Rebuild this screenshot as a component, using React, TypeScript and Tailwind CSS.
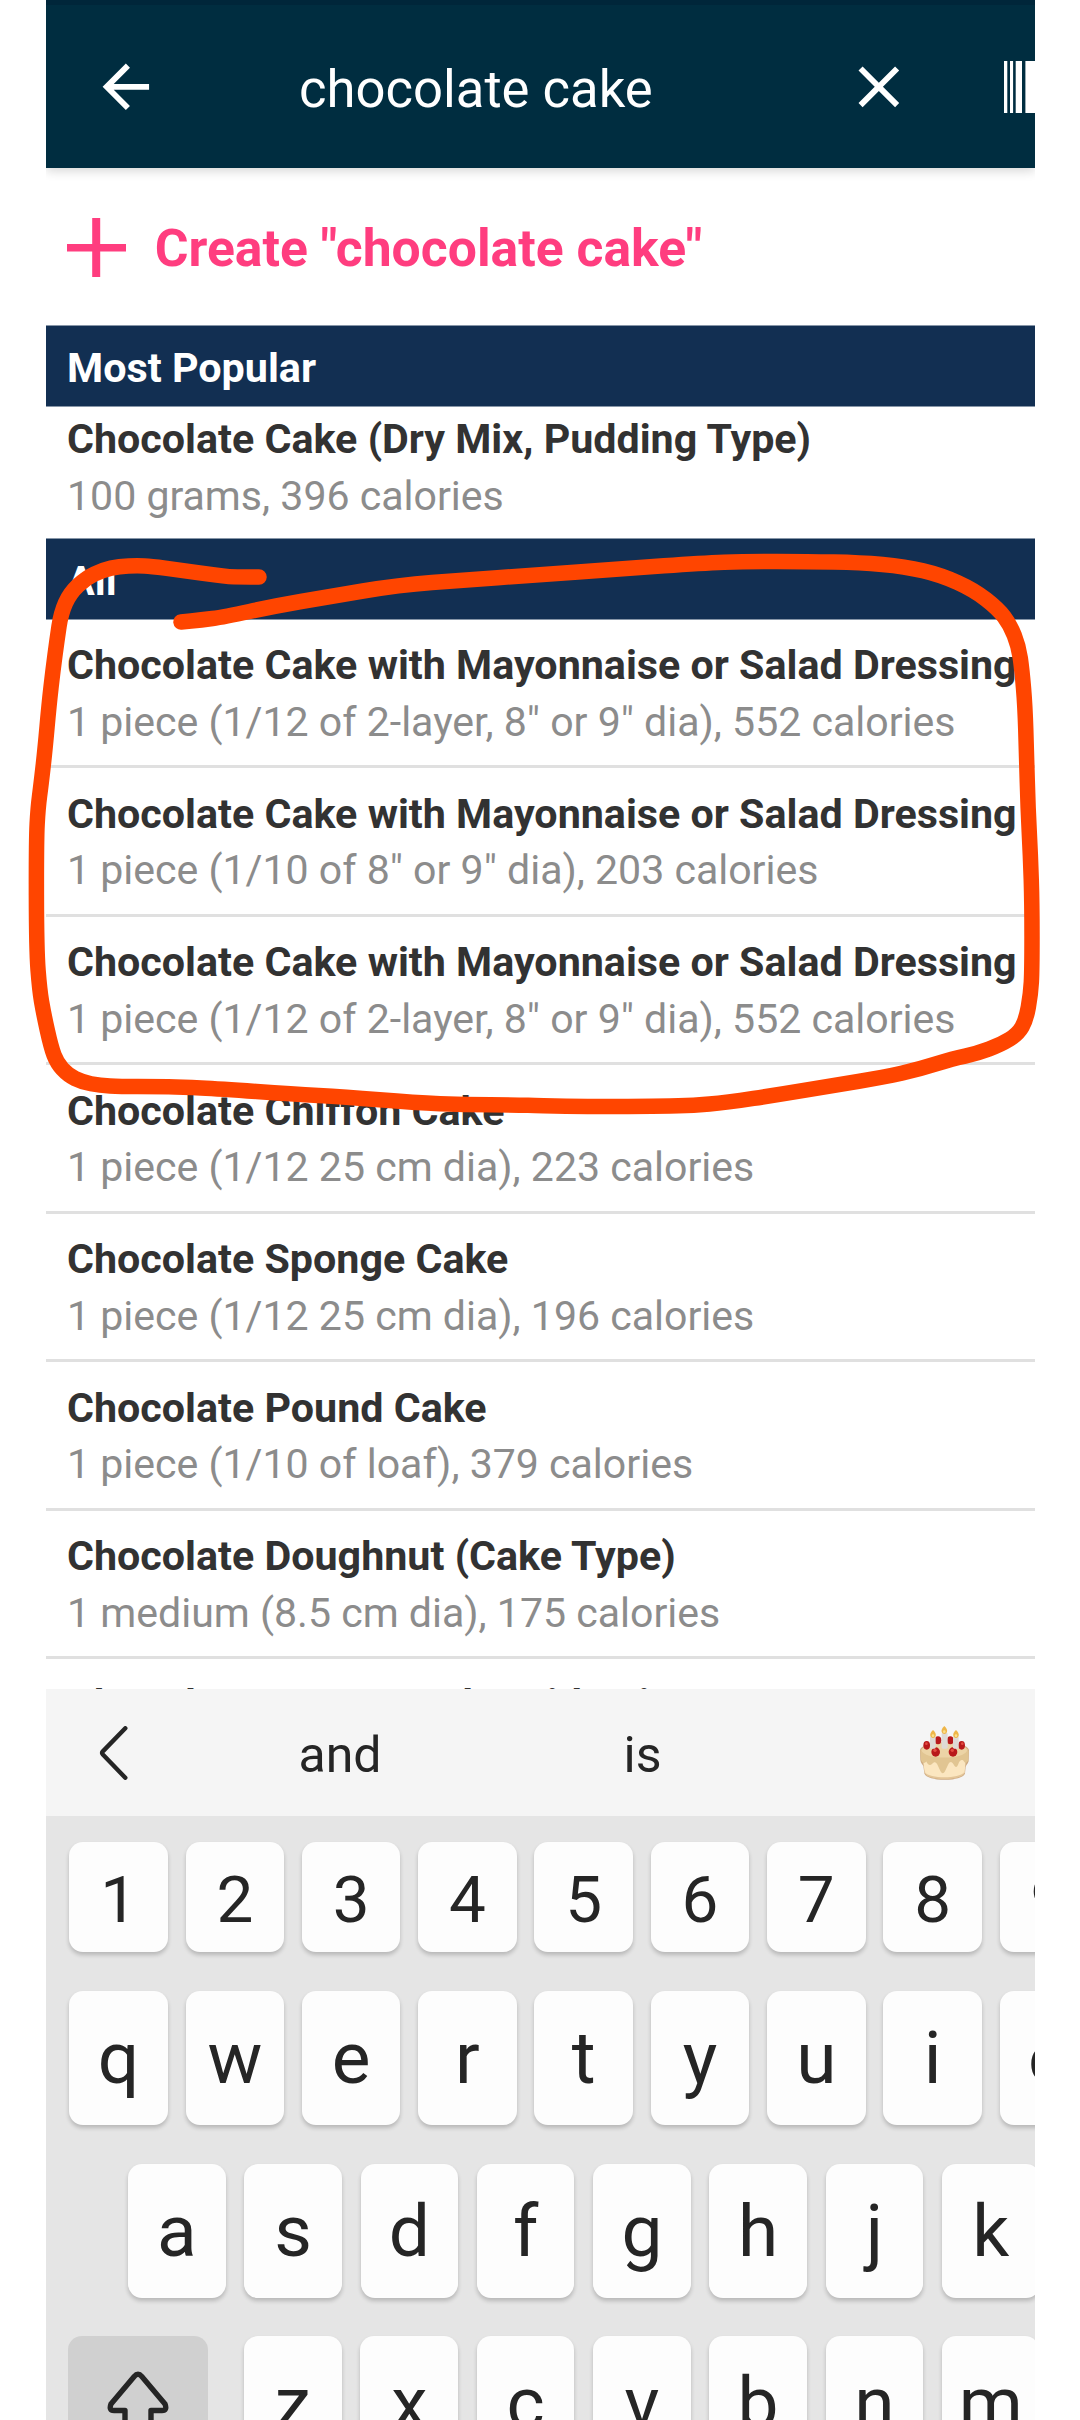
type Food = { name: string; detail: string };

const popular: Food[] = [
  { name: "Chocolate Cake (Dry Mix, Pudding Type)", detail: "100 grams, 396 calories" },
];

const foods: Food[] = [
  { name: "Chocolate Cake with Mayonnaise or Salad Dressing", detail: '1 piece (1/12 of 2-layer, 8" or 9" dia), 552 calories' },
  { name: "Chocolate Cake with Mayonnaise or Salad Dressing", detail: '1 piece (1/10 of 8" or 9" dia), 203 calories' },
  { name: "Chocolate Cake with Mayonnaise or Salad Dressing", detail: '1 piece (1/12 of 2-layer, 8" or 9" dia), 552 calories' },
  { name: "Chocolate Chiffon Cake", detail: "1 piece (1/12 25 cm dia), 223 calories" },
  { name: "Chocolate Sponge Cake", detail: "1 piece (1/12 25 cm dia), 196 calories" },
  { name: "Chocolate Pound Cake", detail: "1 piece (1/10 of loaf), 379 calories" },
  { name: "Chocolate Doughnut (Cake Type)", detail: "1 medium (8.5 cm dia), 175 calories" },
  { name: "Chocolate Banana Cake with Icing", detail: "" },
];

function AppBar() {
  return (
    <header className="relative z-10 h-[168px] shrink-0 border-t-[5px] border-[#00263a] bg-[#002d40] text-white shadow-[0_3px_10px_rgba(0,0,0,0.16)]">
      <div className="flex h-[163px] items-center">
        <svg viewBox="0 0 24 24" className="ml-[44.6px] size-[69.7px] shrink-0" fill="currentColor">
          <path d="M20 11H7.83l5.59-5.59L12 4l-8 8 8 8 1.41-1.41L7.83 13H20v-2z" />
        </svg>
        <span className="ml-[138.7px] w-[545.5px] shrink-0 pt-1 text-[52.6px] leading-[70px] whitespace-nowrap">
          chocolate cake
        </span>
        <svg viewBox="0 0 24 24" className="size-[69.7px] shrink-0" fill="currentColor">
          <path d="M19 6.41L17.59 5 12 10.59 6.41 5 5 6.41 10.59 12 5 17.59 6.41 19 12 13.41 17.59 19 19 17.59 13.41 12z" />
        </svg>
        <svg viewBox="0 0 32 52" className="ml-[89.4px] h-[52px] w-8 shrink-0" fill="currentColor">
          <path d="M0 0h3.3v52H0zM6 0h3.1v52H6zM11.7 0h6.3v52h-6.3zM21.4 0H32v52H21.4z" />
        </svg>
      </div>
    </header>
  );
}

function CreateRow() {
  return (
    <div className="flex h-[157px] shrink-0 items-center pl-[21px] text-[#ff3d7f]">
      <svg viewBox="0 0 59 59" className="mt-px size-[59px] shrink-0" fill="currentColor">
        <path d="M25.2 0h8v59h-8zM0 26h59v7.4H0z" />
      </svg>
      <span className="ml-[28.7px] pt-[5px] text-[51.7px] leading-[70px] font-bold whitespace-nowrap">
        Create "chocolate cake"
      </span>
    </div>
  );
}

function SectionTitle({ children }: { children: string }) {
  return (
    <h2 className="h-[82px] shrink-0 border-y border-[#8796a8] bg-[#122f52] pt-0.5 pl-[21px] text-[41.3px] leading-[80px] font-bold text-white">
      {children}
    </h2>
  );
}

function FoodText({ food }: { food: Food }) {
  return (
    <>
      <p className="text-[41.22px] leading-[57px] font-bold whitespace-nowrap text-[#323232]">{food.name}</p>
      <p className="-mt-[0.4px] text-[41.05px] leading-[57px] whitespace-nowrap text-[#8c8c8c]">{food.detail}</p>
    </>
  );
}

function CakeIcon() {
  return (
    <svg viewBox="0 0 153 164" className="mt-0.5 ml-[0.5px] h-[54.6px] w-[51px]">
      <path d="M3 72C8 42 145 42 150 72l-1 34c-3 9-8 12-9 17l-2 20c-7 25-115 25-122 0l-3-23c-3-5-8-9-9-17z" fill="#cda980" />
      <path d="M11 96h130l-4 44c-7 23-113 23-120 0z" fill="#fbe6c0" />
      <path d="M18 139c12 20 104 20 117 0l-1 5c-8 20-106 20-115 0z" fill="#e3c598" />
      <path d="M4 74C10 46 143 46 149 74l-1 29c-4 8-9 11-13 4-5-9-13-4-17 7-4 12-9 11-14 2-5-10-11-11-16-1l-9 19c-5 11-11 10-16-1l-8-17c-5-10-10-9-16-2-6 6-13 3-17-7-5 7-12 6-16-5z" fill="#e1c592" />
      <ellipse cx="76" cy="73" rx="68" ry="22" fill="#ecd4a6" />
      <g fill="#b8191b">
        <ellipse cx="57" cy="43" rx="10" ry="12" />
        <ellipse cx="94" cy="43" rx="10" ry="12" />
        <ellipse cx="23" cy="58" rx="10" ry="13" />
        <ellipse cx="128" cy="58" rx="10" ry="13" />
        <ellipse cx="50" cy="78" rx="13" ry="14" />
        <ellipse cx="102" cy="78" rx="13" ry="14" />
      </g>
      <g fill="#e34b41">
        <circle cx="22" cy="53" r="4" />
        <circle cx="48" cy="73" r="5" />
        <circle cx="100" cy="73" r="5" />
        <circle cx="130" cy="53" r="4" />
      </g>
      <g fill="#dedad5">
        <rect x="33" y="31" width="17" height="37" rx="4" />
        <rect x="68" y="20" width="18" height="48" rx="4" />
        <rect x="102" y="31" width="17" height="37" rx="4" />
      </g>
      <g fill="#eeb648">
        <path d="M42 12c14 13 8 23 0 24-8-1-14-11 0-24z" />
        <path d="M76 0c14 13 8 23 0 24-8-1-14-11 0-24z" />
        <path d="M111 12c14 13 8 23 0 24-8-1-14-11 0-24z" />
      </g>
      <g fill="#fbe08a">
        <circle cx="42" cy="29" r="4" />
        <circle cx="76" cy="17" r="4" />
        <circle cx="111" cy="29" r="4" />
      </g>
    </svg>
  );
}

function Suggestions() {
  return (
    <div className="flex h-[127px] shrink-0 items-center bg-[#f5f5f5] text-[50px] leading-[70px] text-[#252525]">
      <svg
        viewBox="0 0 30 54"
        className="ml-[53px] h-[54px] w-[30px] shrink-0"
        fill="none"
        stroke="currentColor"
        strokeWidth="4.4"
        strokeLinecap="round"
        strokeLinejoin="round"
      >
        <path d="M26.3 2.3L3.6 25.6Q2.6 27 3.6 28.2L26.3 51.7" />
      </svg>
      <span className="ml-[169.5px] w-[325px] shrink-0 pt-[5px]">and</span>
      <span className="w-[294.5px] shrink-0 pt-[5px]">is</span>
      <CakeIcon />
    </div>
  );
}

function Key({ label, digit }: { label: string; digit?: boolean }) {
  return (
    <div
      className={
        "flex shrink-0 items-center justify-center rounded-[14px] bg-[#fdfdfd] shadow-[0_3px_4px_rgba(0,0,0,0.2)] " +
        (digit ? "h-[110px] w-[98.6px] pt-1.5 text-[65.6px]" : "h-[134.5px] text-[73px] leading-[80px] ") +
        (digit ? "" : "qwertyuio".includes(label) ? "w-[98.6px]" : "w-[97.6px]")
      }
    >
      {label}
    </div>
  );
}

function Keyboard() {
  return (
    <div className="flex h-[604px] shrink-0 flex-col overflow-hidden bg-[#e5e5e5] pt-[26px] text-[#252525]">
      <div className="mb-[38.7px] flex gap-[17.7px] pl-[23.3px]">
        {[..."123456789"].map((k) => <Key key={k} label={k} digit />)}
      </div>
      <div className="mb-[38.8px] flex gap-[17.7px] pl-[23.3px]">
        {[..."qwertyuio"].map((k) => <Key key={k} label={k} />)}
      </div>
      <div className="mb-[37.5px] flex gap-[18.7px] pl-[82px]">
        {[..."asdfghjk"].map((k) => <Key key={k} label={k} />)}
      </div>
      <div className="flex gap-[18.7px] pl-[22.3px]">
        <div className="mr-[17.2px] flex h-[134.5px] w-[140px] shrink-0 justify-center rounded-[14px] bg-[#d0d0d0] pt-[35px]">
          <svg viewBox="0 0 62 66" className="h-[66px] w-[62px]" fill="none" stroke="#252525" strokeWidth="5.4" strokeLinejoin="round">
            <path d="M27.2 5.4Q31 1 34.8 5.4L58 33Q60.5 39.5 55 39.5H44V58Q44 62 40 62H22Q18 62 18 58V39.5H7Q1.5 39.5 4 33z" />
          </svg>
        </div>
        {[..."zxcvbnm"].map((k) => <Key key={k} label={k} />)}
      </div>
    </div>
  );
}

// Centre line of the hand-drawn loop around the duplicate results.
const loop: [number, number][] = [
  [259, 577], [234, 577], [220, 575.7], [179, 570], [151, 566.3], [138, 565.7], [119, 566.3], [103, 570], [86, 578],
  [70, 593], [61, 613], [57, 640], [53, 670], [49, 705], [45, 750], [41, 785], [38, 808], [36.3, 840], [36.5, 950],
  [39.6, 990], [43.5, 1013], [51, 1047], [57, 1063], [68, 1075], [82, 1082], [100, 1085.5], [120, 1086.5], [155, 1086.7],
  [182, 1087], [220, 1089], [293, 1094], [344, 1097], [415, 1102.7], [465, 1104.7], [516, 1104.9], [540, 1105.8],
  [592, 1106.5], [664, 1106.3], [693, 1105.4], [726, 1102.6], [781, 1094.3], [833, 1085.6], [884, 1077], [919, 1069.4],
  [953, 1058.5], [977, 1053.6], [1001, 1044.5], [1018, 1034], [1026, 1020], [1030.7, 994], [1032, 970], [1032, 903],
  [1030.5, 856], [1028, 808], [1026.5, 753], [1025, 705.6], [1022, 670], [1018.6, 646], [1010, 624.6], [998, 608.7],
  [974, 590], [941, 575], [905, 566.5], [860, 562.5], [808, 561.5], [746, 561.3], [702, 563], [626, 568.4], [530, 575.5],
  [465, 580], [399, 585], [327, 597], [275, 606], [224, 617], [201, 620], [181, 622],
];

function loopPath() {
  const [first, ...rest] = loop;
  let d = `M${first[0]} ${first[1]}`;
  rest.forEach(([x, y], i) => {
    const next = rest[i + 1];
    d += next ? `Q${x} ${y} ${(x + next[0]) / 2} ${(y + next[1]) / 2}` : `L${x} ${y}`;
  });
  return d;
}

export default function App() {
  return (
    <div className="relative h-[2420px] w-[1080px] overflow-hidden bg-white font-[Roboto,sans-serif]">
      <main className="ml-[46px] flex h-full w-[989px] flex-col overflow-hidden">
        <div className="flex h-[1689px] shrink-0 flex-col overflow-hidden">
          <AppBar />
          <CreateRow />
          <SectionTitle>Most Popular</SectionTitle>
          {popular.map((food) => (
            <div key={food.name} className="h-[131px] shrink-0 pt-1 pl-[21px]">
              <FoodText food={food} />
            </div>
          ))}
          <SectionTitle>All</SectionTitle>
          {foods.map((food, i) => (
            <div key={i} className="h-[148.46px] shrink-0 border-b-[3px] border-[#e0e0e0] pt-[17.4px] pl-[21px] last:pt-[16.7px]">
              <FoodText food={food} />
            </div>
          ))}
        </div>
        <Suggestions />
        <Keyboard />
      </main>
      <svg viewBox="0 0 1080 2420" className="pointer-events-none absolute inset-0 z-20 size-full" fill="none">
        <path d={loopPath()} stroke="#ff4500" strokeWidth="15.5" strokeLinecap="round" strokeLinejoin="round" />
      </svg>
    </div>
  );
}
